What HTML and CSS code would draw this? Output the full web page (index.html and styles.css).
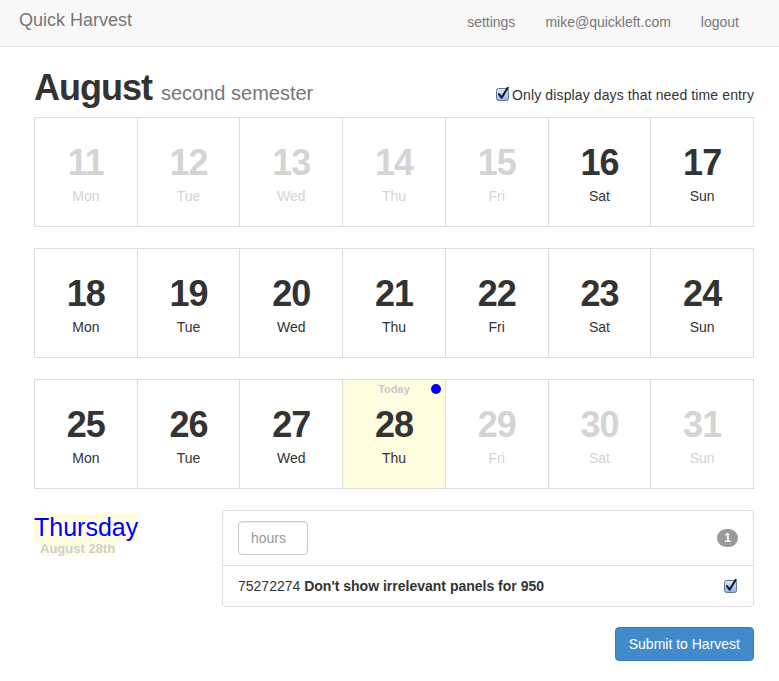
FILE: index.html
```html
<!DOCTYPE html>
<html lang="en">
<head>
<meta charset="utf-8">
<title>Quick Harvest</title>
<link rel="stylesheet" href="styles.css">
</head>
<body>
<nav class="navbar">
  <div class="container nav-inner">
    <a class="brand" href="#">Quick Harvest</a>
    <ul class="nav-links">
      <li><a href="#">settings</a></li>
      <li><a href="#">mike@quickleft.com</a></li>
      <li><a href="#">logout</a></li>
    </ul>
  </div>
</nav>

<main class="container">
  <div class="page-header">
    <h1 class="title">August <small>second semester</small></h1>
    <label class="filter">
      <span class="cbox"><svg width="14" height="14" viewBox="0 0 14 14"><defs><linearGradient id="cg1" x1="0" y1="0" x2="0" y2="1"><stop offset="0" stop-color="#dbe9fb"/><stop offset="1" stop-color="#8db6ea"/></linearGradient></defs><rect x="0.5" y="1.5" width="12" height="12" rx="2" fill="url(#cg1)" stroke="#62779a"/><path d="M3 7.2 L5.6 10.6 L11.8 0.8" fill="none" stroke="#151a24" stroke-width="2.1" stroke-linecap="round" stroke-linejoin="round"/></svg></span>Only display days that need time entry
    </label>
  </div>

  <div class="week">
    <div class="day off"><div class="num">11</div><div class="name">Mon</div></div>
    <div class="day off"><div class="num">12</div><div class="name">Tue</div></div>
    <div class="day off"><div class="num">13</div><div class="name">Wed</div></div>
    <div class="day off"><div class="num">14</div><div class="name">Thu</div></div>
    <div class="day off"><div class="num">15</div><div class="name">Fri</div></div>
    <div class="day"><div class="num">16</div><div class="name">Sat</div></div>
    <div class="day"><div class="num">17</div><div class="name">Sun</div></div>
  </div>
  <div class="week">
    <div class="day"><div class="num">18</div><div class="name">Mon</div></div>
    <div class="day"><div class="num">19</div><div class="name">Tue</div></div>
    <div class="day"><div class="num">20</div><div class="name">Wed</div></div>
    <div class="day"><div class="num">21</div><div class="name">Thu</div></div>
    <div class="day"><div class="num">22</div><div class="name">Fri</div></div>
    <div class="day"><div class="num">23</div><div class="name">Sat</div></div>
    <div class="day"><div class="num">24</div><div class="name">Sun</div></div>
  </div>
  <div class="week">
    <div class="day"><div class="num">25</div><div class="name">Mon</div></div>
    <div class="day"><div class="num">26</div><div class="name">Tue</div></div>
    <div class="day"><div class="num">27</div><div class="name">Wed</div></div>
    <div class="day today"><span class="today-label">Today</span><span class="dot"></span><div class="num">28</div><div class="name">Thu</div></div>
    <div class="day off"><div class="num">29</div><div class="name">Fri</div></div>
    <div class="day off"><div class="num">30</div><div class="name">Sat</div></div>
    <div class="day off"><div class="num">31</div><div class="name">Sun</div></div>
  </div>

  <div class="detail">
    <div class="detail-side">
      <div class="weekday"><span>Thursday</span></div>
      <div class="date"><span>August 28th</span></div>
    </div>
    <div class="detail-main">
      <div class="panel">
        <div class="panel-heading">
          <input class="hours" type="text" placeholder="hours">
          <span class="badge">1</span>
        </div>
        <div class="panel-row">
          <span class="task">75272274 <b>Don't show irrelevant panels for 950</b></span>
          <span class="cbox"><svg width="14" height="14" viewBox="0 0 14 14"><defs><linearGradient id="cg2" x1="0" y1="0" x2="0" y2="1"><stop offset="0" stop-color="#dbe9fb"/><stop offset="1" stop-color="#8db6ea"/></linearGradient></defs><rect x="0.5" y="1.5" width="12" height="12" rx="2" fill="url(#cg2)" stroke="#62779a"/><path d="M3 7.2 L5.6 10.6 L11.8 0.8" fill="none" stroke="#151a24" stroke-width="2.1" stroke-linecap="round" stroke-linejoin="round"/></svg></span>
        </div>
      </div>
      <div class="actions">
        <button class="btn-primary" type="button">Submit to Harvest</button>
      </div>
    </div>
  </div>
</main>
</body>
</html>
```

FILE: styles.css
```css
* { box-sizing: border-box; }

body {
  margin: 0;
  font-family: "Liberation Sans", Helvetica, Arial, sans-serif;
  font-size: 14px;
  line-height: 20px;
  color: #333;
  background: #fff;
}

a { text-decoration: none; }

.container {
  width: 750px;
  margin-left: 19px;
  padding: 0 15px;
}

.navbar {
  height: 47px;
  background: #f8f8f8;
  border-bottom: 1px solid #e7e7e7;
}

.nav-inner {
  display: flex;
  justify-content: space-between;
  align-items: flex-start;
}

.brand {
  margin-left: -15px;
  padding-top: 10px;
  font-size: 18px;
  line-height: 20px;
  color: #777;
}

.nav-links {
  display: flex;
  list-style: none;
  margin: 0;
  padding: 0;
}

.nav-links a {
  display: block;
  padding: 12px 15px 0;
  line-height: 20px;
  color: #777;
}

.page-header {
  display: flex;
  justify-content: space-between;
  align-items: baseline;
  margin: 21px 0 4px;
}

.title {
  margin: 0;
  font-size: 36px;
  line-height: 40px;
  font-weight: bold;
  letter-spacing: -1px;
  color: #333;
}

.title small {
  font-size: 20px;
  font-weight: normal;
  letter-spacing: 0;
  color: #777;
}

.filter {
  display: flex;
  align-items: baseline;
  color: #333;
  letter-spacing: 0.12px;
}

.cbox {
  display: inline-block;
  width: 14px;
  height: 14px;
  margin-right: 1px;
  align-self: center;
}

.cbox svg { display: block; overflow: visible; }

.filter .cbox { position: relative; top: -1px; margin-right: 2px; }

.week {
  display: grid;
  grid-template-columns: repeat(7, 1fr);
  border-top: 1px solid #ddd;
  border-left: 1px solid #ddd;
  margin-bottom: 21px;
}

.day {
  position: relative;
  height: 109px;
  padding-top: 25px;
  border-right: 1px solid #ddd;
  border-bottom: 1px solid #ddd;
  text-align: center;
  color: #333;
}

.day .num {
  font-size: 36px;
  line-height: 40px;
  font-weight: bold;
  letter-spacing: -1px;
}

.day .name {
  margin-top: 3px;
  font-size: 14px;
  line-height: 20px;
}

.day.off { color: #d4d4d4; }

.day.today { background: #fefde0; }

.today-label {
  position: absolute;
  top: 2px;
  left: 0;
  right: 0;
  font-size: 11px;
  line-height: 14px;
  font-weight: bold;
  color: #c8c8c8;
}

.dot {
  position: absolute;
  top: 4px;
  right: 4px;
  width: 10px;
  height: 10px;
  border-radius: 50%;
  background: #0000ff;
}

.detail {
  display: flex;
}

.detail-side {
  width: 188px;
  flex: none;
}

.detail-main {
  flex: 1;
}

.weekday {
  margin-top: 3px;
  font-size: 25px;
  line-height: 28px;
  color: #0000ff;
}

.weekday span,
.date span {
  background: #fefde0;
}

.date {
  margin-left: 6px;
  font-size: 13px;
  line-height: 15px;
  font-weight: bold;
  color: #cfcfcf;
}

.panel {
  border: 1px solid #ddd;
  border-radius: 4px;
}

.panel-heading {
  display: flex;
  justify-content: space-between;
  align-items: center;
  padding: 10px 15px;
  border-bottom: 1px solid #ddd;
}

.hours {
  width: 70px;
  height: 34px;
  padding: 6px 12px;
  border: 1px solid #ccc;
  border-radius: 4px;
  font-family: inherit;
  font-size: 14px;
  color: #555;
  box-shadow: inset 0 1px 1px rgba(0,0,0,0.075);
}

.hours::placeholder { color: #999; }

.badge {
  display: inline-block;
  min-width: 20px;
  height: 18px;
  padding: 3px 7px;
  border-radius: 10px;
  background: #999;
  color: #fff;
  font-size: 12px;
  line-height: 12px;
  font-weight: bold;
  text-align: center;
}

.panel-row {
  display: flex;
  justify-content: space-between;
  align-items: center;
  padding: 10px 15px;
}

.panel-row .cbox { margin-right: 0; }

.actions {
  display: flex;
  justify-content: flex-end;
  margin-top: 20px;
}

.btn-primary {
  padding: 6px 13px;
  border: 1px solid #357ebd;
  border-radius: 4px;
  background: #428bca;
  color: #fff;
  font-family: inherit;
  font-size: 14px;
  line-height: 20px;
  cursor: pointer;
}
```
